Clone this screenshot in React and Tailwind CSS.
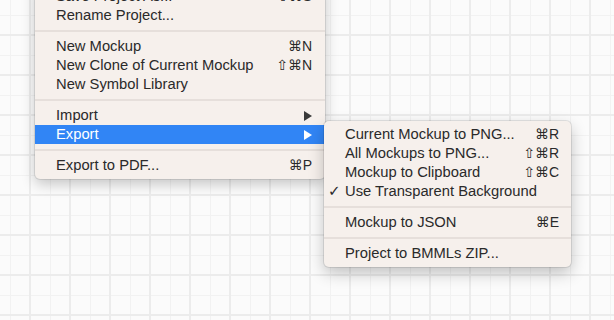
import React from 'react';
import clsx from 'clsx';

const Arrow = ({ white }) => (
  <svg width="8" height="10" viewBox="0 0 8 10" className="block">
    <polygon points="0,0 8,5 0,10" fill={white ? '#ffffff' : '#3a3a3a'} />
  </svg>
);

const Sep = () => (
  <div className="h-[12px] flex items-center">
    <div className="h-[2px] w-full bg-[#e6dfdb]" />
  </div>
);

const Row = ({ label, shortcut, arrow, active, check, sub }) => (
  <div
    className={clsx(
      'flex items-center h-[19px] leading-[19px] whitespace-nowrap',
      sub ? 'pl-[4px] pr-[12px]' : 'pl-[21px] pr-[13px]',
      active ? 'bg-[#3185f5] text-white' : 'text-[#2a2a2a]'
    )}
  >
    {sub && <span className="w-[17px] text-[15px] font-['DejaVu_Sans',sans-serif]">{check ? '✓' : ''}</span>}
    <span className="flex-1">{label}</span>
    {shortcut && <span className="font-['Liberation_Sans','DejaVu_Sans',sans-serif] text-[14px]">{shortcut}</span>}
    {arrow && <Arrow white={active} />}
  </div>
);

export default function App() {
  return (
    <div className="relative w-[614px] h-[320px] overflow-hidden bg-[#fbfbfb] [background-image:linear-gradient(to_right,#ececec_2px,transparent_2px),linear-gradient(to_bottom,#ececec_2px,transparent_2px),linear-gradient(to_right,#f2f2f2_1px,transparent_1px),linear-gradient(to_bottom,#f2f2f2_1px,transparent_1px)] [background-size:40px_40px,40px_40px,20px_20px,20px_20px] [background-position:29px_0,0_34px,10px_0,0_15px] font-['Liberation_Sans','DejaVu_Sans',sans-serif] text-[14.75px]">
      <div className="ml-[35px] mt-[-17px] w-[290px] pt-[4px] pb-[4px] rounded-b-[5px] bg-[#f6f0ec] shadow-[0_0_0_1px_rgba(0,0,0,0.09),0_5px_14px_rgba(0,0,0,0.22)]">
        <Row label="Save Project As..." shortcut="⇧⌘S" />
        <Row label="Rename Project..." />
        <Sep />
        <Row label="New Mockup" shortcut="⌘N" />
        <Row label="New Clone of Current Mockup" shortcut="⇧⌘N" />
        <Row label="New Symbol Library" />
        <Sep />
        <Row label="Import" arrow />
        <Row label="Export" arrow active />
        <Sep />
        <Row label="Export to PDF..." shortcut="⌘P" />
      </div>

      <div className="absolute left-[324px] top-[121px] w-[247px] py-[4px] rounded-[5px] bg-[#f6f0ec] shadow-[0_0_0_1px_rgba(0,0,0,0.09),0_6px_16px_rgba(0,0,0,0.24)]">
        <Row sub label="Current Mockup to PNG..." shortcut="⌘R" />
        <Row sub label="All Mockups to PNG..." shortcut="⇧⌘R" />
        <Row sub label="Mockup to Clipboard" shortcut="⇧⌘C" />
        <Row sub check label="Use Transparent Background" />
        <Sep />
        <Row sub label="Mockup to JSON" shortcut="⌘E" />
        <Sep />
        <Row sub label="Project to BMMLs ZIP..." />
      </div>
    </div>
  );
}
